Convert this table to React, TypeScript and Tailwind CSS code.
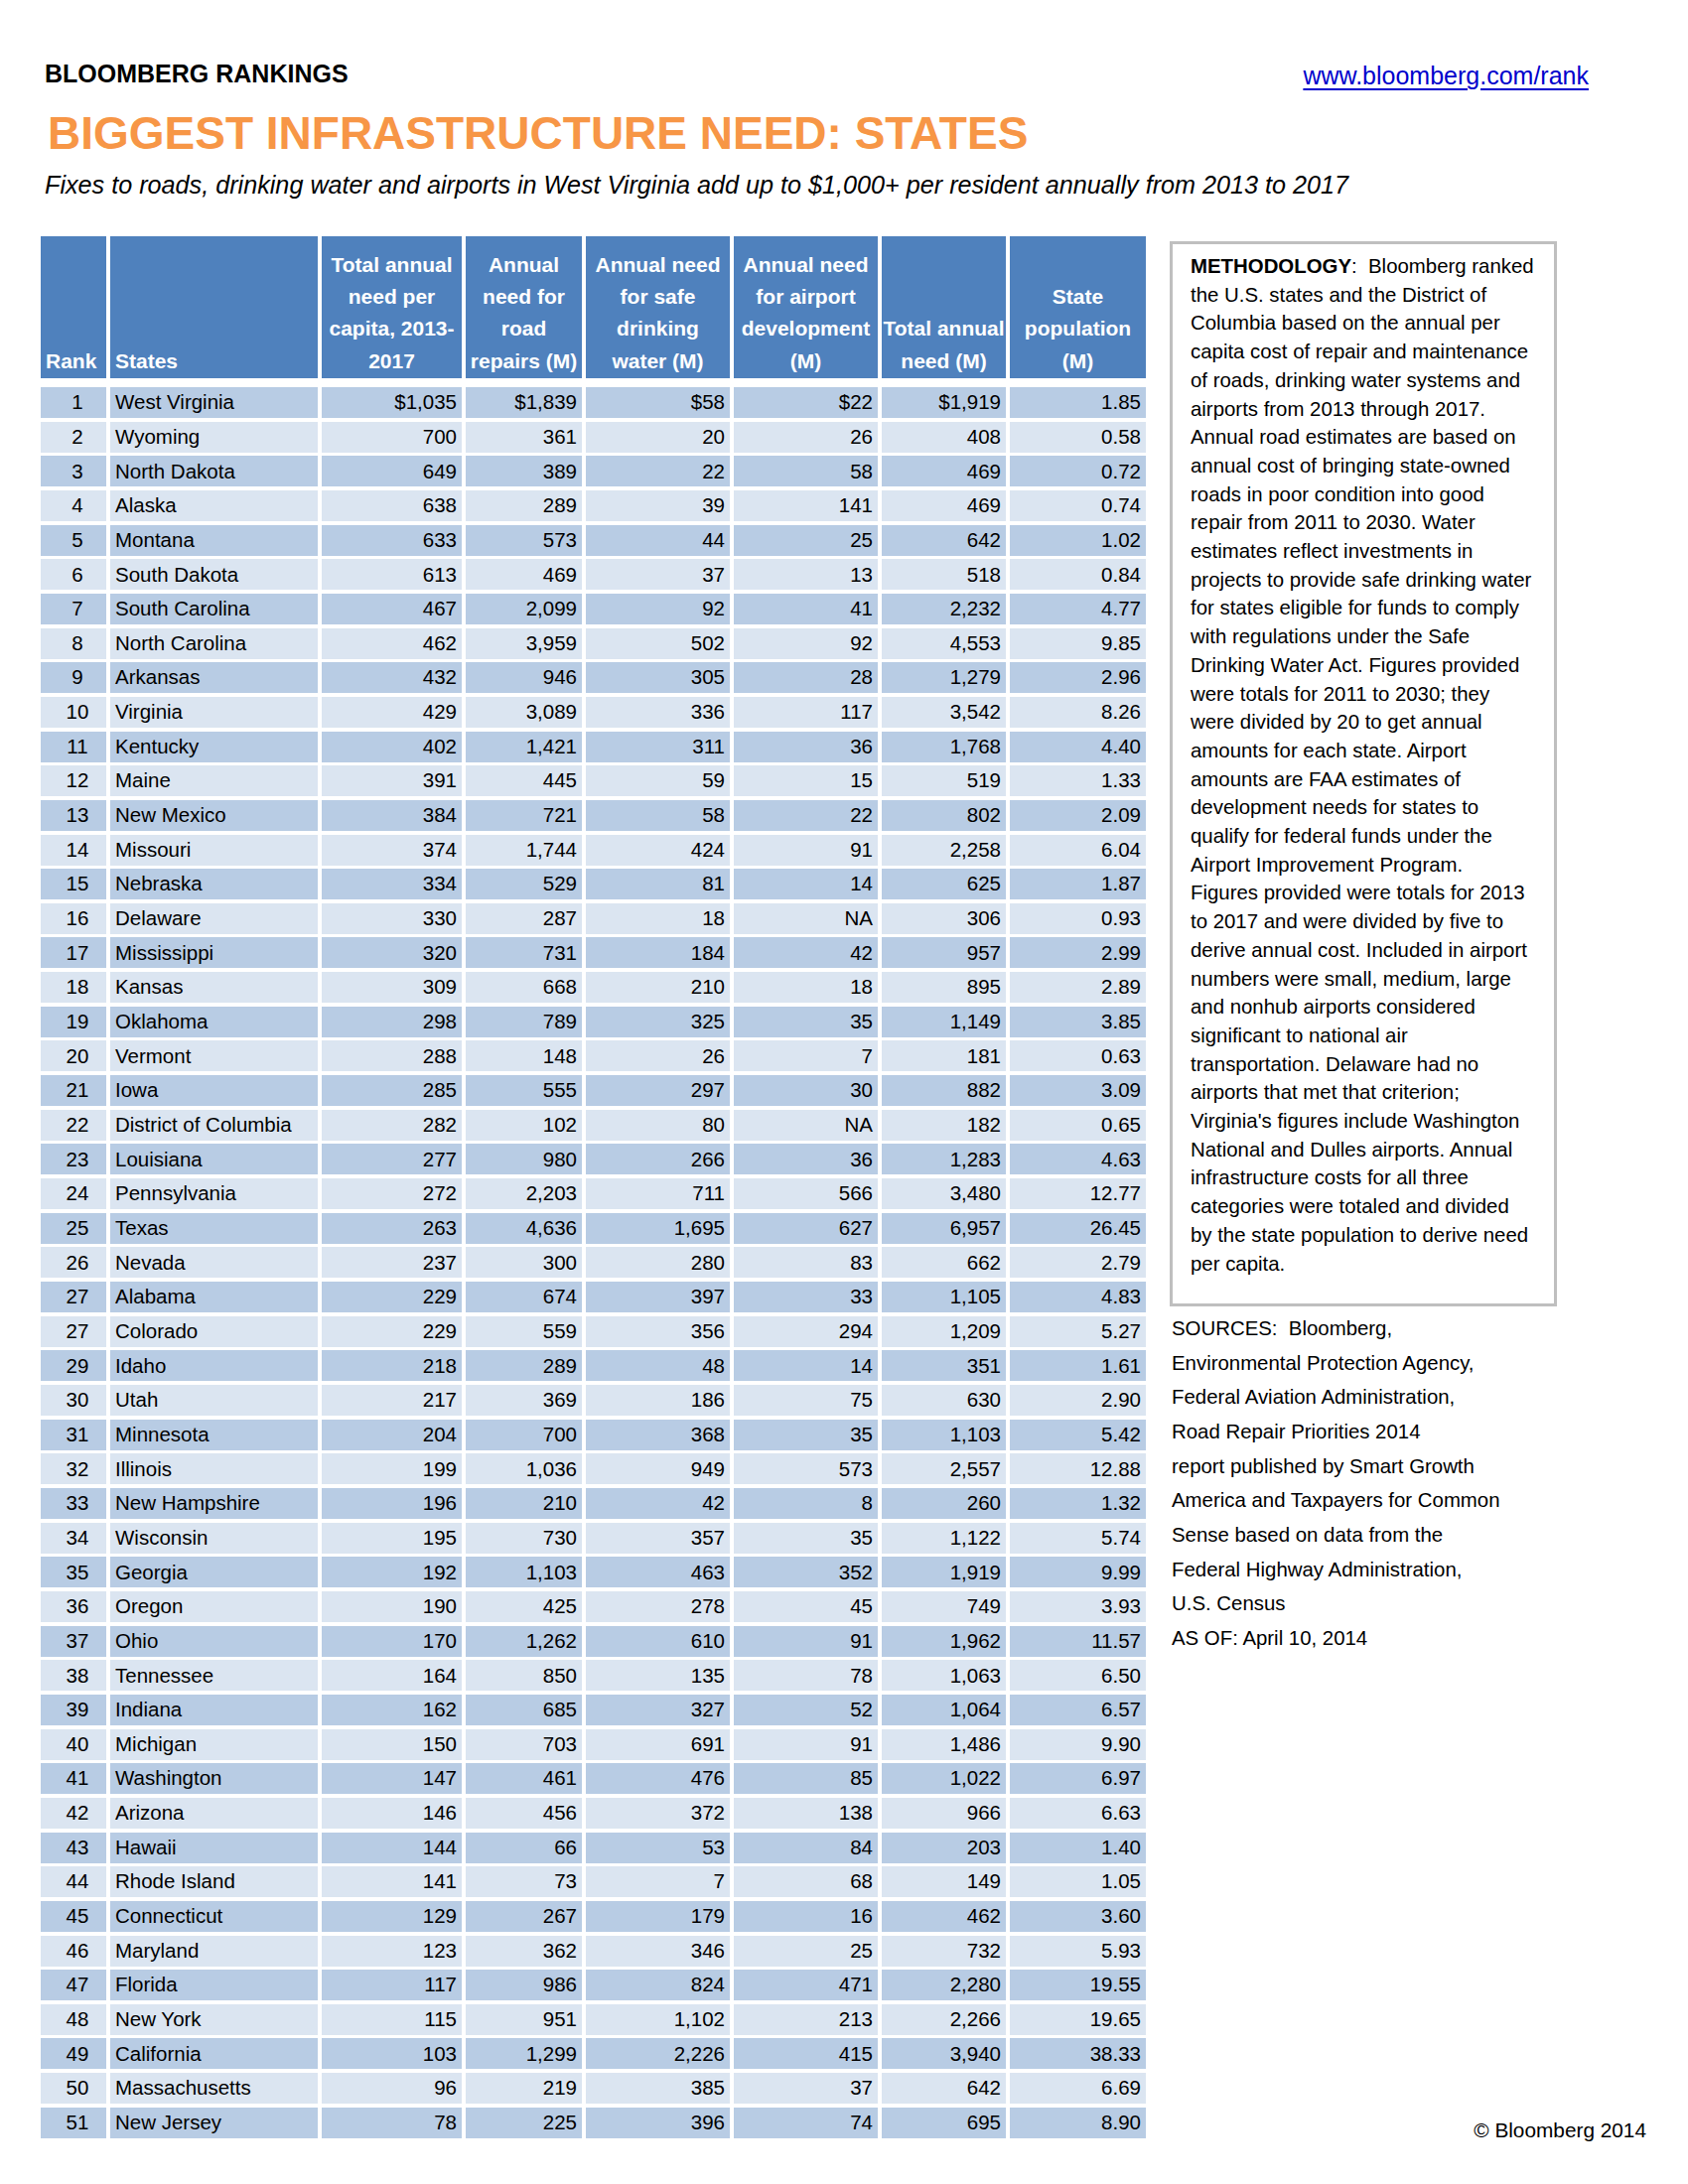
const COLS =
  "grid grid-cols-[66px_209px_141px_117px_145px_145px_125px_137px] gap-x-[4px]";

const headers: string[][] = [
  ["Rank"],
  ["States"],
  ["Total annual", "need per", "capita, 2013-", "2017"],
  ["Annual", "need for", "road", "repairs (M)"],
  ["Annual need", "for safe", "drinking", "water (M)"],
  ["Annual need", "for airport", "development", "(M)"],
  ["Total annual", "need (M)"],
  ["State", "population", "(M)"],
];

const data = `1|West Virginia|$1,035|$1,839|$58|$22|$1,919|1.85
2|Wyoming|700|361|20|26|408|0.58
3|North Dakota|649|389|22|58|469|0.72
4|Alaska|638|289|39|141|469|0.74
5|Montana|633|573|44|25|642|1.02
6|South Dakota|613|469|37|13|518|0.84
7|South Carolina|467|2,099|92|41|2,232|4.77
8|North Carolina|462|3,959|502|92|4,553|9.85
9|Arkansas|432|946|305|28|1,279|2.96
10|Virginia|429|3,089|336|117|3,542|8.26
11|Kentucky|402|1,421|311|36|1,768|4.40
12|Maine|391|445|59|15|519|1.33
13|New Mexico|384|721|58|22|802|2.09
14|Missouri|374|1,744|424|91|2,258|6.04
15|Nebraska|334|529|81|14|625|1.87
16|Delaware|330|287|18|NA|306|0.93
17|Mississippi|320|731|184|42|957|2.99
18|Kansas|309|668|210|18|895|2.89
19|Oklahoma|298|789|325|35|1,149|3.85
20|Vermont|288|148|26|7|181|0.63
21|Iowa|285|555|297|30|882|3.09
22|District of Columbia|282|102|80|NA|182|0.65
23|Louisiana|277|980|266|36|1,283|4.63
24|Pennsylvania|272|2,203|711|566|3,480|12.77
25|Texas|263|4,636|1,695|627|6,957|26.45
26|Nevada|237|300|280|83|662|2.79
27|Alabama|229|674|397|33|1,105|4.83
27|Colorado|229|559|356|294|1,209|5.27
29|Idaho|218|289|48|14|351|1.61
30|Utah|217|369|186|75|630|2.90
31|Minnesota|204|700|368|35|1,103|5.42
32|Illinois|199|1,036|949|573|2,557|12.88
33|New Hampshire|196|210|42|8|260|1.32
34|Wisconsin|195|730|357|35|1,122|5.74
35|Georgia|192|1,103|463|352|1,919|9.99
36|Oregon|190|425|278|45|749|3.93
37|Ohio|170|1,262|610|91|1,962|11.57
38|Tennessee|164|850|135|78|1,063|6.50
39|Indiana|162|685|327|52|1,064|6.57
40|Michigan|150|703|691|91|1,486|9.90
41|Washington|147|461|476|85|1,022|6.97
42|Arizona|146|456|372|138|966|6.63
43|Hawaii|144|66|53|84|203|1.40
44|Rhode Island|141|73|7|68|149|1.05
45|Connecticut|129|267|179|16|462|3.60
46|Maryland|123|362|346|25|732|5.93
47|Florida|117|986|824|471|2,280|19.55
48|New York|115|951|1,102|213|2,266|19.65
49|California|103|1,299|2,226|415|3,940|38.33
50|Massachusetts|96|219|385|37|642|6.69
51|New Jersey|78|225|396|74|695|8.90`
  .split("\n")
  .map(line => line.split("|"));

const methodology = [
  "the U.S. states and the District of",
  "Columbia based on the annual per",
  "capita cost of repair and maintenance",
  "of roads, drinking water systems and",
  "airports from 2013 through 2017.",
  "Annual road estimates are based on",
  "annual cost of bringing state-owned",
  "roads in poor condition into good",
  "repair from 2011 to 2030. Water",
  "estimates reflect investments in",
  "projects to provide safe drinking water",
  "for states eligible for funds to comply",
  "with regulations under the Safe",
  "Drinking Water Act. Figures provided",
  "were totals for 2011 to 2030; they",
  "were divided by 20 to get annual",
  "amounts for each state. Airport",
  "amounts are FAA estimates of",
  "development needs for states to",
  "qualify for federal funds under the",
  "Airport Improvement Program.",
  "Figures provided were totals for 2013",
  "to 2017 and were divided by five to",
  "derive annual cost. Included in airport",
  "numbers were small, medium, large",
  "and nonhub airports considered",
  "significant to national air",
  "transportation. Delaware had no",
  "airports that met that criterion;",
  "Virginia's figures include Washington",
  "National and Dulles airports. Annual",
  "infrastructure costs for all three",
  "categories were totaled and divided",
  "by the state population to derive need",
  "per capita.",
];

const sources = [
  "SOURCES:  Bloomberg,",
  "Environmental Protection Agency,",
  "Federal Aviation Administration,",
  "Road Repair Priorities 2014",
  "report published by Smart Growth",
  "America and Taxpayers for Common",
  "Sense based on data from the",
  "Federal Highway Administration,",
  "U.S. Census",
  "AS OF: April 10, 2014",
];

function RankingTable() {
  return (
    <div className="w-[1113px] text-[20.5px] text-black">
      {/* header */}
      <div className={`${COLS} h-[143px]`}>
        {headers.map((h, i) => (
          <div
            key={i}
            className={`bg-[#4f81bd] text-white text-[21px] font-bold flex flex-col justify-end leading-[32.3px] pb-[1px] ${
              i < 2 ? "items-start pl-[5px]" : "items-center text-center"
            }`}
          >
            {h.map(l => (
              <span key={l} className="whitespace-nowrap">
                {l}
              </span>
            ))}
          </div>
        ))}
      </div>

      {/* rows */}
      <div className="mt-[9px] flex flex-col gap-y-[3.67px]">
        {data.map((r, i) => (
          <div key={i} className={`${COLS} h-[31px]`}>
            {r.map((c, j) => (
              <div
                key={j}
                className={`flex items-center leading-none whitespace-nowrap ${
                  i % 2 === 0 ? "bg-[#b8cce4]" : "bg-[#dbe5f1]"
                } ${j === 0 ? "justify-center pl-[8px]" : j === 1 ? "pl-[5px]" : "justify-end pr-[5px]"}`}
              >
                {c}
              </div>
            ))}
          </div>
        ))}
      </div>
    </div>
  );
}

export default function App() {
  return (
    <div className="w-[1700px] h-[2200px] bg-white text-black font-['Liberation_Sans','Arial',sans-serif]">
      {/* Cabeçalho */}
      <div className="pl-[45px] pt-[62px]">
        <div className="flex justify-between items-start h-[25px] pr-[100px]">
          <div className="text-[25px] leading-[25px] font-bold">BLOOMBERG RANKINGS</div>
          <a
            href="#"
            className="mt-[2px] text-[25px] leading-[25px] text-[#0000cc] underline decoration-2 underline-offset-[4px] whitespace-nowrap"
          >
            www.bloomberg.com/rank
          </a>
        </div>
        <div className="mt-[24px] ml-[3px] text-[46px] leading-[46px] font-bold text-[#f79646] whitespace-nowrap">
          BIGGEST INFRASTRUCTURE NEED: STATES
        </div>
        <div className="mt-[16.6px] text-[25.2px] leading-[25.2px] italic whitespace-nowrap">
          Fixes to roads, drinking water and airports in West Virginia add up to $1,000+ per resident annually from 2013 to 2017
        </div>
      </div>

      {/* tabela + notas */}
      <div className="mt-[39.2px] flex pl-[41px]">
        <RankingTable />

        <div className="ml-[24px] w-[480px] flex flex-col text-[20.4px]">
          <div className="mt-[5px] w-[390px] h-[1073px] border-[3px] border-[#bfbfbf] pl-[18px] pt-[8px] leading-[28.7px]">
            <div className="whitespace-pre">
              <span className="font-bold">METHODOLOGY</span>:  Bloomberg ranked
            </div>
            {methodology.map(l => (
              <div key={l} className="whitespace-pre">
                {l}
              </div>
            ))}
          </div>

          <div className="mt-[5px] pl-[2px] leading-[34.67px]">
            {sources.map(l => (
              <div key={l} className="whitespace-pre">
                {l}
              </div>
            ))}
          </div>

          <div className="mt-auto self-end -mb-[4px] leading-[24px] text-[20.8px]">© Bloomberg 2014</div>
        </div>
      </div>
    </div>
  );
}
